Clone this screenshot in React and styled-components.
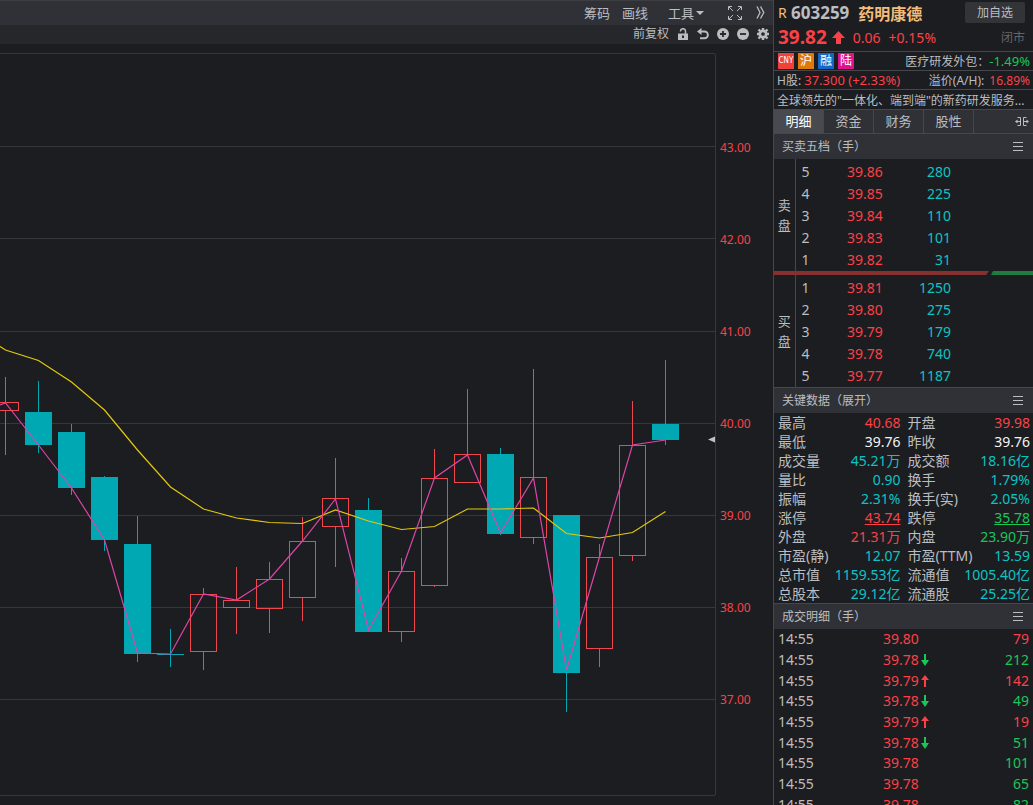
import React from "react";
import styled, { createGlobalStyle, css } from "styled-components";

const color = {
  bg: "#1c1d20",
  bar: "#303136",
  subBar: "#26272a",
  line: "#46474b",
  grid: "#36373a",
  text: "#bbbdc0",
  dim: "#64666b",
  red: "#fb4147",
  green: "#19c759",
  cyan: "#0cc3c6",
  white: "#f4f4f4",
  gold: "#f2bd7c",
  teal: "#00a8b3",
};

const GlobalStyle = createGlobalStyle`
  *, *::before, *::after { box-sizing: border-box; }
  body {
    margin: 0;
    background: ${color.bg};
    color: ${color.text};
    font-family: "Noto Sans", "Noto Sans CJK SC", sans-serif;
    font-size: 14px;
    overflow: hidden;
  }
  button {
    margin: 0;
    padding: 0;
    border: 0;
    background: none;
    color: inherit;
    font: inherit;
    cursor: pointer;
  }
  table { border-collapse: collapse; border-spacing: 0; }
  th { font-weight: 400; text-align: left; }
  th, td { padding: 0; white-space: nowrap; }
  svg { display: block; }
`;

const Page = styled.div`
  display: flex;
  height: 100vh;
  overflow: hidden;
`;

const ChartPane = styled.main`
  display: flex;
  flex: 1;
  flex-direction: column;
  min-width: 0;
`;

const Toolbar = styled.div`
  display: flex;
  flex: none;
  align-items: center;
  justify-content: flex-end;
  height: 25px;
  padding: 0 8px 1px 0;
  border-top: 1px solid #3d3e42;
  background: ${color.bar};
  font-size: 13px;
  line-height: 22px;
`;

const ToolButton = styled.button`
  display: flex;
  align-items: center;
  margin-left: ${(p) => p.$gap || 12}px;
`;

const Caret = styled.span`
  margin-left: 2px;
  border: 4px solid transparent;
  border-bottom-width: 0;
  border-top-color: currentColor;
`;

const SubToolbar = styled.div`
  display: flex;
  flex: none;
  align-items: center;
  justify-content: flex-end;
  gap: 8px;
  height: 19px;
  padding: 0 4px 1px 0;
  background: ${color.subBar};
  font-size: 12px;
  line-height: 18px;
`;

const ChartArea = styled.div`
  flex: 1;
  min-height: 0;

  svg {
    width: 100%;
    height: 100%;
  }
`;

const Panel = styled.aside`
  flex: none;
  width: 260px;
  overflow: hidden;
  border-left: 1px solid ${color.line};
`;

const InfoRow = styled.div`
  display: flex;
  align-items: center;
  height: ${(p) => p.$height}px;
  padding: 0 3px ${(p) => p.$lift || 0}px 3px;
  border-bottom: ${(p) => (p.$plain ? "0" : `1px solid ${color.line}`)};
  font-size: ${(p) => p.$size || 12}px;
  white-space: nowrap;
`;

const Mark = styled.span`
  width: 14px;
  padding-left: 1px;
  color: ${color.gold};
`;

const Code = styled.strong`
  font-size: 17px;
`;

const StockName = styled.h1`
  margin: 0 0 0 9px;
  color: ${color.gold};
  font-size: 16px;
  font-weight: 700;
`;

const AddButton = styled.button`
  width: 60px;
  height: 21px;
  margin: 0 5px 0 auto;
  border-radius: 2px;
  background: #333438;
  font-size: 12px;
  line-height: 21px;
`;

const LastPrice = styled.strong`
  margin: 0 5px 0 1px;
  color: ${color.red};
  font-size: 19px;
`;

const Tone = styled.span`
  color: ${(p) => color[p.$tone]};
  font-size: ${(p) => p.$size || 14}px;
  ${(p) => p.$underline && css`text-decoration: underline;`}
`;

const Change = styled(Tone)`
  margin-left: 8px;
`;

const Push = styled.span`
  margin-left: auto;
`;

const Premium = styled(Tone)`
  margin-left: 2px;
`;

const MarketState = styled.span`
  margin-left: auto;
  padding-right: 5px;
  color: ${color.dim};
  font-size: 12px;
`;

const Tag = styled.span`
  display: flex;
  align-items: center;
  justify-content: center;
  width: 16px;
  height: 16px;
  margin: 0 3px 0 1px;
  background: ${(p) => p.$fill};
  color: #fff;
  font-size: 12px;
  line-height: 16px;
`;

const CurrencyTag = styled(Tag)`
  font-family: "Liberation Sans Narrow", "DejaVu Sans Condensed", sans-serif;
  font-size: 8px;
`;

const Slogan = styled.p`
  flex: 1;
  margin: 0;
  overflow: hidden;
`;

const Tabs = styled.nav`
  display: flex;
  align-items: center;
  height: 25px;
  border-top: 1px solid ${color.line};
  border-bottom: 1px solid ${color.line};
  background: ${color.bar};
  font-size: 13px;
`;

const Tab = styled.button`
  width: 50px;
  height: 23px;
  border-right: 1px solid ${color.line};
  background: ${(p) => (p.$active ? "#494a4f" : "transparent")};
  color: ${(p) => (p.$active ? "#fff" : "inherit")};
  line-height: 23px;
`;

const IconButton = styled.button`
  margin-left: auto;
  margin-right: ${(p) => p.$end}px;
`;

const SectionHead = styled.header`
  display: flex;
  align-items: center;
  height: ${(p) => p.$height}px;
  padding-left: 8px;
  border-top: ${(p) => (p.$line ? `1px solid ${color.line}` : "0")};
  background: ${color.bar};
`;

const SectionTitle = styled.h2`
  margin: 0;
  font-size: 12px;
  font-weight: 400;
  line-height: 24px;
`;

const BookTable = styled.table`
  width: 100%;
  table-layout: fixed;

  tr { height: 22px; }
  tr:first-child { height: 24px; }
  td { line-height: 22px; }
  tr:first-child td { padding-top: 2px; }
`;

const SideCell = styled.th`
  width: 21px;
  border-right: 1px solid ${color.line};
  font-size: 13px;
  line-height: 20px;
  text-align: center;

  span {
    display: block;
    width: 13px;
    margin: 0 auto;
    white-space: normal;
    word-break: break-all;
  }
`;

const Level = styled.td`
  width: 52px;
  padding-left: 6px;
`;

const BookPrice = styled.td`
  width: 52px;
  color: ${color.red};
`;

const BookVolume = styled.td`
  padding-right: 82px;
  color: ${color.cyan};
  text-align: right;
`;

const Ratio = styled.div`
  display: flex;
  height: 4px;
`;

const RatioPart = styled.div`
  flex: ${(p) => p.$share};
  background: ${(p) => p.$fill};
  clip-path: ${(p) =>
    p.$side === "buy"
      ? "polygon(0 0, 100% 0, calc(100% - 3px) 100%, 0 100%)"
      : "polygon(4px 0, 100% 0, 100% 100%, 2px 100%)"};
`;

const KeyTable = styled.table`
  width: 100%;
  table-layout: fixed;

  tr { height: 19px; }
  th, td { line-height: 19px; }
  th { width: 56px; padding-left: 4px; }
  td { padding-right: 3px; text-align: right; }
`;

const TradeTable = styled.table`
  width: 100%;
  table-layout: fixed;

  tr { height: 21px; }
  tr:nth-child(3n + 1) { height: 20px; }
  td { line-height: 20px; }
  td:first-child { width: 109px; padding-left: 4px; }
  td:last-child { width: 60px; padding-right: 4px; text-align: right; }
`;

const TradePrice = styled.div`
  display: flex;
  align-items: center;
  gap: 2px;
  color: ${color.red};
`;

// x centres step by 33; values are high, body top, body bottom, low
const candles = [
  ["up", 377, 402, 411, 455],
  ["down", 381, 412, 445, 453],
  ["down", 424, 432, 488, 495],
  ["down", 476, 477, 540, 551],
  ["down", 516, 544, 654, 662],
  ["down", 629, 654, 655, 667],
  ["up", 588, 594, 652, 670],
  ["up", 567, 600, 608, 634],
  ["up", 562, 579, 609, 633],
  ["up", 517, 541, 598, 621],
  ["up", 458, 498, 527, 567],
  ["down", 498, 510, 632, 632],
  ["up", 558, 571, 632, 642],
  ["up", 449, 478, 586, 587],
  ["up", 389, 454, 483, 483],
  ["down", 448, 454, 534, 535],
  ["up", 369, 477, 538, 544],
  ["down", 515, 515, 673, 712],
  ["up", 544, 557, 649, 667],
  ["up", 401, 445, 556, 561],
  ["down", 360, 424, 440, 445],
];

const closeLine = [
  403, 445, 488, 540, 653, 654, 594, 600, 579, 541, 499, 630, 571, 478, 455,
  533, 478, 670, 557, 445, 440,
];
const averageLine = [
  350, 360.5, 382, 410, 450, 487, 509, 518, 522.5, 523.5, 510, 521, 529.5,
  526.5, 509, 509, 508, 533.5, 538, 532.5, 511.5,
];

const centre = (i) => 5.5 + 33 * i;
const toPoints = (start, ys) =>
  [`0,${start}`, ...ys.map((y, i) => `${centre(i)},${y}`)].join(" ");

function Candle({ index, data }) {
  const [kind, high, top, bottom, low] = data;
  const x = centre(index);
  if (kind === "down") {
    return (
      <g fill={color.teal}>
        <rect x={x - 13.5} y={top} width="27" height={bottom - top} />
        <rect x={x - 0.5} y={high} width="1" height={low - high} />
      </g>
    );
  }
  return (
    <g stroke="#f0464d" fill="none">
      <rect x={x - 13} y={top + 0.5} width="26" height={bottom - top - 1} />
      <path d={`M${x} ${high}V${top}M${x} ${bottom}V${low}`} />
    </g>
  );
}

function Chart() {
  const levels = [43, 42, 41, 40, 39, 38, 37];
  return (
    <svg viewBox="0 44 773 761" preserveAspectRatio="xMaxYMin slice" role="img" aria-label="K线图">
      <path d="M0 53.5H714Q715.5 53.5 715.5 55V794Q715.5 795.5 714 795.5H0" fill="none" stroke={color.grid} />
      {levels.map((level, i) => (
        <g key={level}>
          <path d={`M0 ${147 + 92 * i + (i > 1 ? 0.5 : -0.5)}H715`} stroke={color.grid} />
          <text x="720" y={152 + 92 * i} fill={color.red} fontSize="12">
            {level.toFixed(2)}
          </text>
        </g>
      ))}
      {candles.map((data, i) => (
        <Candle key={i} index={i} data={data} />
      ))}
      <polyline points={toPoints(346.5, averageLine)} fill="none" stroke="#e3c70e" strokeWidth="1.2" />
      <polyline points={toPoints(405, closeLine)} fill="none" stroke="#dd45a8" strokeWidth="1.2" />
      <path d="M708 439.5L715 436.5V442.5Z" fill="#c0c2c5" />
    </svg>
  );
}

const ExpandIcon = () => (
  <svg width="14" height="14" viewBox="0 0 14 14" fill="none" stroke="currentColor">
    <path d="M0.500 4V.5H4M10 .5H13.500V4M13.500 10V13.500H10M4 13.500H.5V10M1 1L5 5M13 1L9 5M13 13L9 9M1 13L5 9" />
  </svg>
);

const ChevronsIcon = () => (
  <svg width="9" height="13" viewBox="0 0 9 13" fill="none" stroke="currentColor" strokeWidth="1.3">
    <path d="M1 .5L4 6.500L1 12.500M4.500 .5L7.800 6.500L4.500 12.500" />
  </svg>
);

const LockIcon = () => (
  <svg width="12" height="12" viewBox="0 0 12 12">
    <path d="M3.500 3.500V3A2.500 2.300 0 0 1 8.500 3V6" fill="none" stroke="currentColor" strokeWidth="1.500" />
    <path fillRule="evenodd" fill="currentColor" d="M1 5.500H11V12H1ZM5 7.500V10H7V7.500Z" />
  </svg>
);

const UndoIcon = () => (
  <svg width="12" height="12" viewBox="0 0 12 12">
    <path d="M2.500 3.500H7.500A3.400 3.400 0 0 1 7.500 10.300H3" fill="none" stroke="currentColor" strokeWidth="1.900" />
    <path d="M0 3.500L4.500 0V7Z" fill="currentColor" />
  </svg>
);

const RoundIcon = ({ plus }) => (
  <svg width="12" height="12" viewBox="0 0 12 12">
    <circle cx="6" cy="6" r="6" fill="currentColor" />
    <path d={plus ? "M3 6H9M6 3V9" : "M3 6H9"} stroke={color.subBar} strokeWidth="1.800" />
  </svg>
);

const GearIcon = () => (
  <svg width="12" height="12" viewBox="0 0 12 12" fill="none" stroke="currentColor">
    <circle cx="6" cy="6" r="3.200" strokeWidth="2.700" />
    <path
      d="M6 -.5V2M6 10V12.500M-.5 6H2M10 6H12.500M1.500 1.500L3.200 3.200M8.800 8.800L10.500 10.500M10.500 1.500L8.800 3.200M3.200 8.800L1.500 10.500"
      strokeWidth="2.400"
    />
  </svg>
);

const SplitIcon = () => (
  <svg width="14" height="11" viewBox="0 0 14 11" fill="none" stroke="currentColor">
    <path d="M2.500 1.500H5.500V9.500H2.500M11.500 1.500H8.500V9.500H11.500M1 5.500H5M9 5.500H13" />
    <path d="M0 5.500L2.500 3.500V7.500ZM14 5.500L11.500 3.500V7.500Z" fill="currentColor" stroke="none" />
  </svg>
);

const MenuIcon = () => (
  <svg width="10" height="9" viewBox="0 0 10 9" stroke="currentColor">
    <path d="M0 .5H10M0 4.500H10M0 8.500H10" />
  </svg>
);

const BigArrow = () => (
  <svg width="13" height="13" viewBox="0 0 13 13" fill={color.red}>
    <path d="M6.500 0L13 7H9V13H4V7H0Z" />
  </svg>
);

const TickArrow = ({ down }) => (
  <svg width="8" height="12" viewBox="0 0 8 12" fill={down ? color.green : color.red}>
    <path d={down ? "M3 0H5V6H8L4 12L0 6H3Z" : "M3 12H5V5H8L4 0L0 5H3Z"} />
  </svg>
);

function Section({ title, height, line }) {
  return (
    <SectionHead $height={height} $line={line}>
      <SectionTitle>{title}</SectionTitle>
      <IconButton $end={10} aria-label="菜单">
        <MenuIcon />
      </IconButton>
    </SectionHead>
  );
}

const sells = [
  [5, "39.86", 280],
  [4, "39.85", 225],
  [3, "39.84", 110],
  [2, "39.83", 101],
  [1, "39.82", 31],
];
const buys = [
  [1, "39.81", 1250],
  [2, "39.80", 275],
  [3, "39.79", 179],
  [4, "39.78", 740],
  [5, "39.77", 1187],
];

function Book({ side, rows }) {
  return (
    <BookTable>
      <tbody>
        {rows.map(([level, price, volume], i) => (
          <tr key={level}>
            {i === 0 && (
              <SideCell rowSpan={5} scope="rowgroup">
                <span>{side}</span>
              </SideCell>
            )}
            <Level>{level}</Level>
            <BookPrice>{price}</BookPrice>
            <BookVolume>{volume}</BookVolume>
          </tr>
        ))}
      </tbody>
    </BookTable>
  );
}

const keyRows = [
  [["最高", "40.68", "red"], ["开盘", "39.98", "red"]],
  [["最低", "39.76", "white"], ["昨收", "39.76", "white"]],
  [["成交量", "45.21万", "cyan"], ["成交额", "18.16亿", "cyan"]],
  [["量比", "0.90", "cyan"], ["换手", "1.79%", "cyan"]],
  [["振幅", "2.31%", "cyan"], ["换手(实)", "2.05%", "cyan"]],
  [["涨停", "43.74", "red", true], ["跌停", "35.78", "green", true]],
  [["外盘", "21.31万", "red"], ["内盘", "23.90万", "green"]],
  [["市盈(静)", "12.07", "cyan"], ["市盈(TTM)", "13.59", "cyan"]],
  [["总市值", "1159.53亿", "cyan"], ["流通值", "1005.40亿", "cyan"]],
  [["总股本", "29.12亿", "cyan"], ["流通股", "25.25亿", "cyan"]],
];

const trades = [
  ["39.80", "", 79, "red"],
  ["39.78", "down", 212, "green"],
  ["39.79", "up", 142, "red"],
  ["39.78", "down", 49, "green"],
  ["39.79", "up", 19, "red"],
  ["39.78", "down", 51, "green"],
  ["39.78", "", 101, "green"],
  ["39.78", "", 65, "green"],
  ["39.78", "", 82, "green"],
];

export default function App() {
  return (
    <Page>
      <GlobalStyle />
      <ChartPane>
        <Toolbar>
          <ToolButton>筹码</ToolButton>
          <ToolButton>画线</ToolButton>
          <ToolButton $gap={20}>
            工具
            <Caret />
          </ToolButton>
          <ToolButton $gap={24} aria-label="全屏">
            <ExpandIcon />
          </ToolButton>
          <ToolButton $gap={14} aria-label="更多">
            <ChevronsIcon />
          </ToolButton>
        </Toolbar>
        <SubToolbar>
          <button>前复权</button>
          <button aria-label="锁定"><LockIcon /></button>
          <button aria-label="撤销"><UndoIcon /></button>
          <button aria-label="放大"><RoundIcon plus /></button>
          <button aria-label="缩小"><RoundIcon /></button>
          <button aria-label="设置"><GearIcon /></button>
        </SubToolbar>
        <ChartArea>
          <Chart />
        </ChartArea>
      </ChartPane>

      <Panel>
        <InfoRow $height={25} $plain $size={14}>
          <Mark>R</Mark>
          <Code>603259</Code>
          <StockName>药明康德</StockName>
          <AddButton>加自选</AddButton>
        </InfoRow>
        <InfoRow $height={27} $lift={2}>
          <LastPrice>39.82</LastPrice>
          <BigArrow />
          <Change $tone="red">0.06</Change>
          <Change $tone="red">+0.15%</Change>
          <MarketState>闭市</MarketState>
        </InfoRow>
        <InfoRow $height={19}>
          <CurrencyTag $fill="#f0413a">CNY</CurrencyTag>
          <Tag $fill="#e0790c">沪</Tag>
          <Tag $fill="#1467c4">融</Tag>
          <Tag $fill="#e0148a">陆</Tag>
          <Push>
            医疗研发外包：<Tone $tone="green" $size={13}>-1.49%</Tone>
          </Push>
        </InfoRow>
        <InfoRow $height={19}>
          <span>
            H股: <Tone $tone="red" $size={13}>37.300 (+2.33%)</Tone>
          </span>
          <Push>
            溢价(A/H): <Premium $tone="red" $size={12}>16.89%</Premium>
          </Push>
        </InfoRow>
        <InfoRow $height={19} $plain>
          <Slogan>全球领先的"一体化、端到端"的新药研发服务...</Slogan>
        </InfoRow>
        <Tabs>
          <Tab $active>明细</Tab>
          <Tab>资金</Tab>
          <Tab>财务</Tab>
          <Tab>股性</Tab>
          <IconButton $end={4} aria-label="分栏">
            <SplitIcon />
          </IconButton>
        </Tabs>

        <Section title="买卖五档（手）" height={25} />
        <Book side="卖盘" rows={sells} />
        <Ratio>
          <RatioPart $share={215} $fill="#86302f" $side="buy" />
          <RatioPart $share={44} $fill="#1f7d42" $side="sell" />
        </Ratio>
        <Book side="买盘" rows={buys} />

        <Section title="关键数据（展开）" height={26} line />
        <KeyTable>
          <tbody>
            {keyRows.map((cells) => (
              <tr key={cells[0][0]}>
                {cells.map(([label, value, tone, underline]) => (
                  <React.Fragment key={label}>
                    <th scope="row">{label}</th>
                    <td>
                      <Tone $tone={tone} $underline={underline}>{value}</Tone>
                    </td>
                  </React.Fragment>
                ))}
              </tr>
            ))}
          </tbody>
        </KeyTable>

        <Section title="成交明细（手）" height={26} line />
        <TradeTable>
          <tbody>
            {trades.map(([price, move, volume, tone], i) => (
              <tr key={i}>
                <td>14:55</td>
                <td>
                  <TradePrice>
                    {price}
                    {move && <TickArrow down={move === "down"} />}
                  </TradePrice>
                </td>
                <td>
                  <Tone $tone={tone}>{volume}</Tone>
                </td>
              </tr>
            ))}
          </tbody>
        </TradeTable>
      </Panel>
    </Page>
  );
}
